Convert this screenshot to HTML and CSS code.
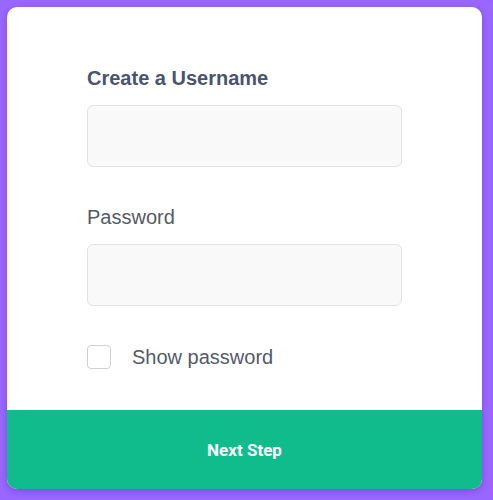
FILE: index.html
```html
<!DOCTYPE html>
<html lang="en">
<head>
    <meta charset="UTF-8">
    <meta name="viewport" content="width=device-width, initial-scale=1.0">
    <title>Sign Up</title>
    <link rel="stylesheet" href="styles.css">
</head>
<body>
    <div class="card">
        <form class="form">
            <div class="field">
                <label class="heading" for="username">Create a Username</label>
                <input type="text" id="username">
            </div>
            <div class="field">
                <label for="password">Password</label>
                <input type="password" id="password">
            </div>
            <label class="check">
                <input type="checkbox" id="show">
                <span class="box"></span>
                <span>Show password</span>
            </label>
        </form>
        <button class="next" type="button">Next Step</button>
    </div>
</body>
</html>
```

FILE: styles.css
```css
body {
    font-family: "Liberation Sans", Arial, sans-serif;
    margin: 0;
    padding: 7px;
    background: #9966ff;
    height: 500px;
    box-sizing: border-box;
}
.card {
    width: 475px;
    background: #fff;
    border-radius: 10px;
    box-shadow: 0 2px 6px rgba(40,0,120,0.25);
    overflow: hidden;
}
.form {
    padding: 60px 80px 41px;
    display: flex;
    flex-direction: column;
}
.field {
    display: flex;
    flex-direction: column;
    margin-bottom: 39px;
}
label {
    font-size: 20px;
    color: #555a66;
    margin-bottom: 15px;
}
.heading {
    font-weight: bold;
    color: #4a5470;
}
.field input {
    height: 62px;
    box-sizing: border-box;
    border: 1px solid #e2e2e2;
    border-radius: 6px;
    background: #f9f9f9;
    font-size: 18px;
    padding: 0 14px;
}
.check {
    display: flex;
    align-items: center;
    gap: 21px;
    margin: 0;
    cursor: pointer;
}
.check input {
    display: none;
}
.box {
    width: 24px;
    height: 24px;
    box-sizing: border-box;
    border: 1px solid #cfcfcf;
    border-radius: 4px;
    background: #fff;
}
.next {
    display: block;
    width: 100%;
    height: 79px;
    border: none;
    background: #10bc8b;
    color: #fff;
    font-family: Roboto, sans-serif;
    font-weight: bold;
    font-size: 17px;
    cursor: pointer;
}
```
